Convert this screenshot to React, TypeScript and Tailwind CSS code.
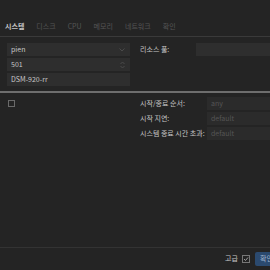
import { useState } from 'react'

const tabs = ['시스템', '디스크', 'CPU', '메모리', '네트워크', '확인']

const font = { fontFamily: '"Noto Sans CJK KR", "Liberation Sans", sans-serif' }

const Field = ({ value, suffix }: { value: string; suffix?: React.ReactNode }) => (
  <div className="flex h-[13px] items-center justify-between bg-[#2e2e2e] pl-[4px] pr-[4px] text-[7px] text-[#c8c8c8]">
    <span>{value}</span>
    {suffix}
  </div>
)

const Row = ({ label, placeholder }: { label: string; placeholder: string }) => (
  <div className="flex h-[13px] items-center">
    <span className="w-[67px] whitespace-nowrap text-[7px] text-[#c4c4c4]">{label}</span>
    <div className="flex h-[13px] flex-1 items-center bg-[#2b2b2b] pl-[4px] text-[7px] text-[#555]">
      {placeholder}
    </div>
  </div>
)

export default function App() {
  const [advanced, setAdvanced] = useState(true)

  return (
    <div className="flex h-[270px] w-[270px] flex-col bg-[#242424]" style={font}>
      <div className="flex h-[37px] items-end gap-[12px] border-b border-[#3a3a3a] pb-[5px] pl-[5px] text-[7px]">
        {tabs.map((tab, i) => (
          <span key={tab} className={i === 0 ? 'font-bold text-[#c4c4c4]' : 'text-[#555]'}>
            {tab}
          </span>
        ))}
      </div>

      <div className="flex h-[54px] pt-[6px]">
        <div className="flex w-[130px] flex-col gap-[2px] pl-[7px]">
          <Field
            value="pien"
            suffix={
              <svg width="6" height="4" viewBox="0 0 6 4" className="mr-[1px]">
                <path d="M0.5 0.5 L3 3 L5.5 0.5" fill="none" stroke="#4a4a4a" strokeWidth="1" />
              </svg>
            }
          />
          <Field
            value="501"
            suffix={
              <svg width="5" height="8" viewBox="0 0 5 8" className="mr-[1px]">
                <path d="M0.5 3 L2.5 1 L4.5 3 M0.5 5 L2.5 7 L4.5 5" fill="none" stroke="#4a4a4a" strokeWidth="1" />
              </svg>
            }
          />
          <Field value="DSM-920-rr" />
        </div>
        <div className="flex h-[13px] flex-1 items-center pl-[10px]">
          <span className="w-[56px] text-[7px] text-[#c4c4c4]">리소스 풀:</span>
          <div className="h-[13px] flex-1 bg-[#2e2e2e]" />
        </div>
      </div>

      <div className="h-[2px] bg-[#6e6e6e]" />

      <div className="flex flex-1 pt-[4px]">
        <div className="w-[133px] pl-[8px] pt-[3px]">
          <div className="h-[7px] w-[7px] border border-[#6a6a6a]" />
        </div>
        <div className="flex flex-1 flex-col gap-[2px] pl-[7px]">
          <Row label="시작/종료 순서:" placeholder="any" />
          <Row label="시작 지연:" placeholder="default" />
          <Row label="시스템 종료 시간 초과:" placeholder="default" />
        </div>
      </div>

      <div className="flex h-[23px] items-center justify-end gap-[4px] border-t border-[#333] pb-[1px]">
        <span className="text-[7px] text-[#c4c4c4]">고급</span>
        <button
          type="button"
          onClick={() => setAdvanced(!advanced)}
          className="flex h-[8px] w-[8px] items-center justify-center border border-[#777]"
        >
          {advanced ? (
            <svg width="6" height="6" viewBox="0 0 6 6">
              <path d="M1 3 L2.5 4.5 L5 1.5" fill="none" stroke="#aaa" strokeWidth="0.9" />
            </svg>
          ) : null}
        </button>
        <div className="ml-[1px] flex h-[14px] w-[15px] items-center overflow-hidden whitespace-nowrap rounded-l-[2px] bg-[#2b4a6f] pl-[5px] text-[7px] text-[#9fb3cc]">
          확인
        </div>
      </div>
    </div>
  )
}
